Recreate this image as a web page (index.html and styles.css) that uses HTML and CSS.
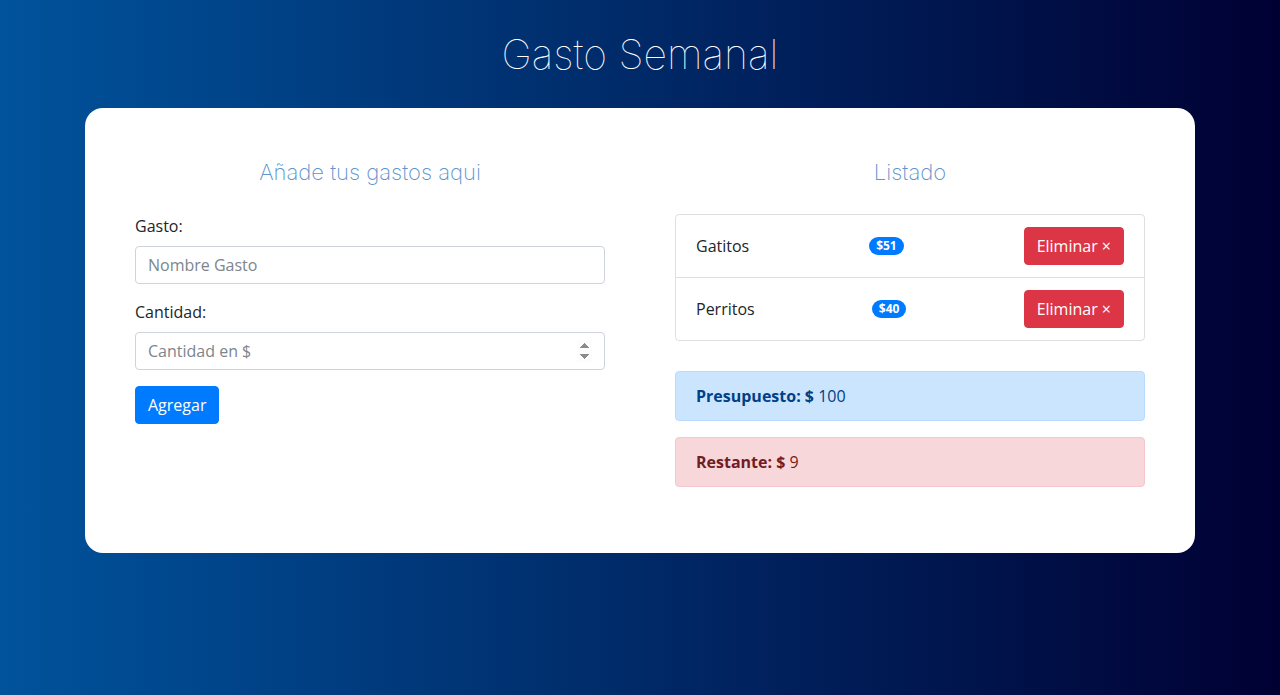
FILE: index.html
```html
<!DOCTYPE html>
<html lang="es">
<head>
<meta charset="utf-8">
<title>Gasto Semanal</title>
<link rel="stylesheet" href="styles.css">
</head>
<body>
<header class="header">
  <h1 class="title">Gasto Semanal</h1>
</header>
<main class="card">
  <section class="col">
    <h2 class="subtitle">Añade tus gastos aqui</h2>
    <form class="form">
      <div class="field">
        <label class="label" for="gasto">Gasto:</label>
        <input class="input" id="gasto" type="text" placeholder="Nombre Gasto">
      </div>
      <div class="field">
        <label class="label" for="cantidad">Cantidad:</label>
        <input class="input" id="cantidad" type="number" placeholder="Cantidad en $">
      </div>
      <button class="btn btn-primary" type="button">Agregar</button>
    </form>
  </section>
  <section class="col">
    <h2 class="subtitle">Listado</h2>
    <ul class="list">
      <li class="item">
        <span class="item-name">Gatitos</span>
        <span class="badge">$51</span>
        <button class="btn btn-danger" type="button">Eliminar &times;</button>
      </li>
      <li class="item">
        <span class="item-name">Perritos</span>
        <span class="badge">$40</span>
        <button class="btn btn-danger" type="button">Eliminar &times;</button>
      </li>
    </ul>
    <div class="alert alert-primary"><strong>Presupuesto: $</strong> 100</div>
    <div class="alert alert-danger"><strong>Restante: $</strong> 9</div>
  </section>
</main>
</body>
</html>
```
FILE: styles.css
```css
* { box-sizing: border-box; }
html, body { height: 100%; }
body {
  margin: 0;
  background: linear-gradient(to right, #00539c, #000033);
  font-family: "Open Sans", "Noto Sans", sans-serif;
  font-size: 16px;
  line-height: 1.5;
  color: #212529;
}
.header {
  padding-top: 24px;
  height: 108px;
}
.title {
  margin: 0;
  text-align: center;
  color: #fff;
  font-family: Inter, "Lato", sans-serif;
  font-weight: 100;
  font-size: 41px;
  line-height: 60px;
}
.card {
  width: 1110px;
  margin: 0 auto;
  background: #fff;
  border-radius: 18px;
  padding: 50px;
  display: grid;
  grid-template-columns: 470px 470px;
  column-gap: 70px;
}
.subtitle {
  margin: 0 0 27px;
  text-align: center;
  font-family: Inter, "Lato", sans-serif;
  font-weight: 200;
  font-size: 22px;
  line-height: 29px;
  color: #5f95cd;
}
.form { margin: 0; }
.field { margin-bottom: 16px; }
.label {
  display: block;
  margin-bottom: 8px;
}
.input {
  display: block;
  width: 100%;
  height: 38px;
  padding: 6px 12px;
  font: inherit;
  color: #495057;
  background: #fff;
  border: 1px solid #ced4da;
  border-radius: 4px;
}
.input::placeholder { color: #7d858c; }
.input::-webkit-inner-spin-button { opacity: 1; }
.btn {
  display: inline-block;
  font: inherit;
  line-height: 24px;
  padding: 6px 12px;
  border: 1px solid transparent;
  border-radius: 4px;
  color: #fff;
  cursor: pointer;
}
.btn-primary { background: #007bff; border-color: #007bff; }
.btn-danger { background: #dc3545; border-color: #dc3545; }
.list {
  list-style: none;
  margin: 0 0 30px;
  padding: 0;
  border: 1px solid rgba(0,0,0,.125);
  border-radius: 4px;
}
.item {
  display: flex;
  align-items: center;
  justify-content: space-between;
  padding: 12px 20px;
}
.item + .item { border-top: 1px solid rgba(0,0,0,.125); }
.badge {
  display: inline-block;
  background: #007bff;
  color: #fff;
  font-size: 12px;
  font-weight: 700;
  line-height: 12px;
  padding: 3px 7px;
  border-radius: 10rem;
}
.alert {
  padding: 12px 20px;
  margin-bottom: 16px;
  border: 1px solid transparent;
  border-radius: 4px;
}
.alert-primary { background: #cce5ff; border-color: #b8daff; color: #004085; }
.alert-danger { background: #f8d7da; border-color: #f5c6cb; color: #721c24; }
```
